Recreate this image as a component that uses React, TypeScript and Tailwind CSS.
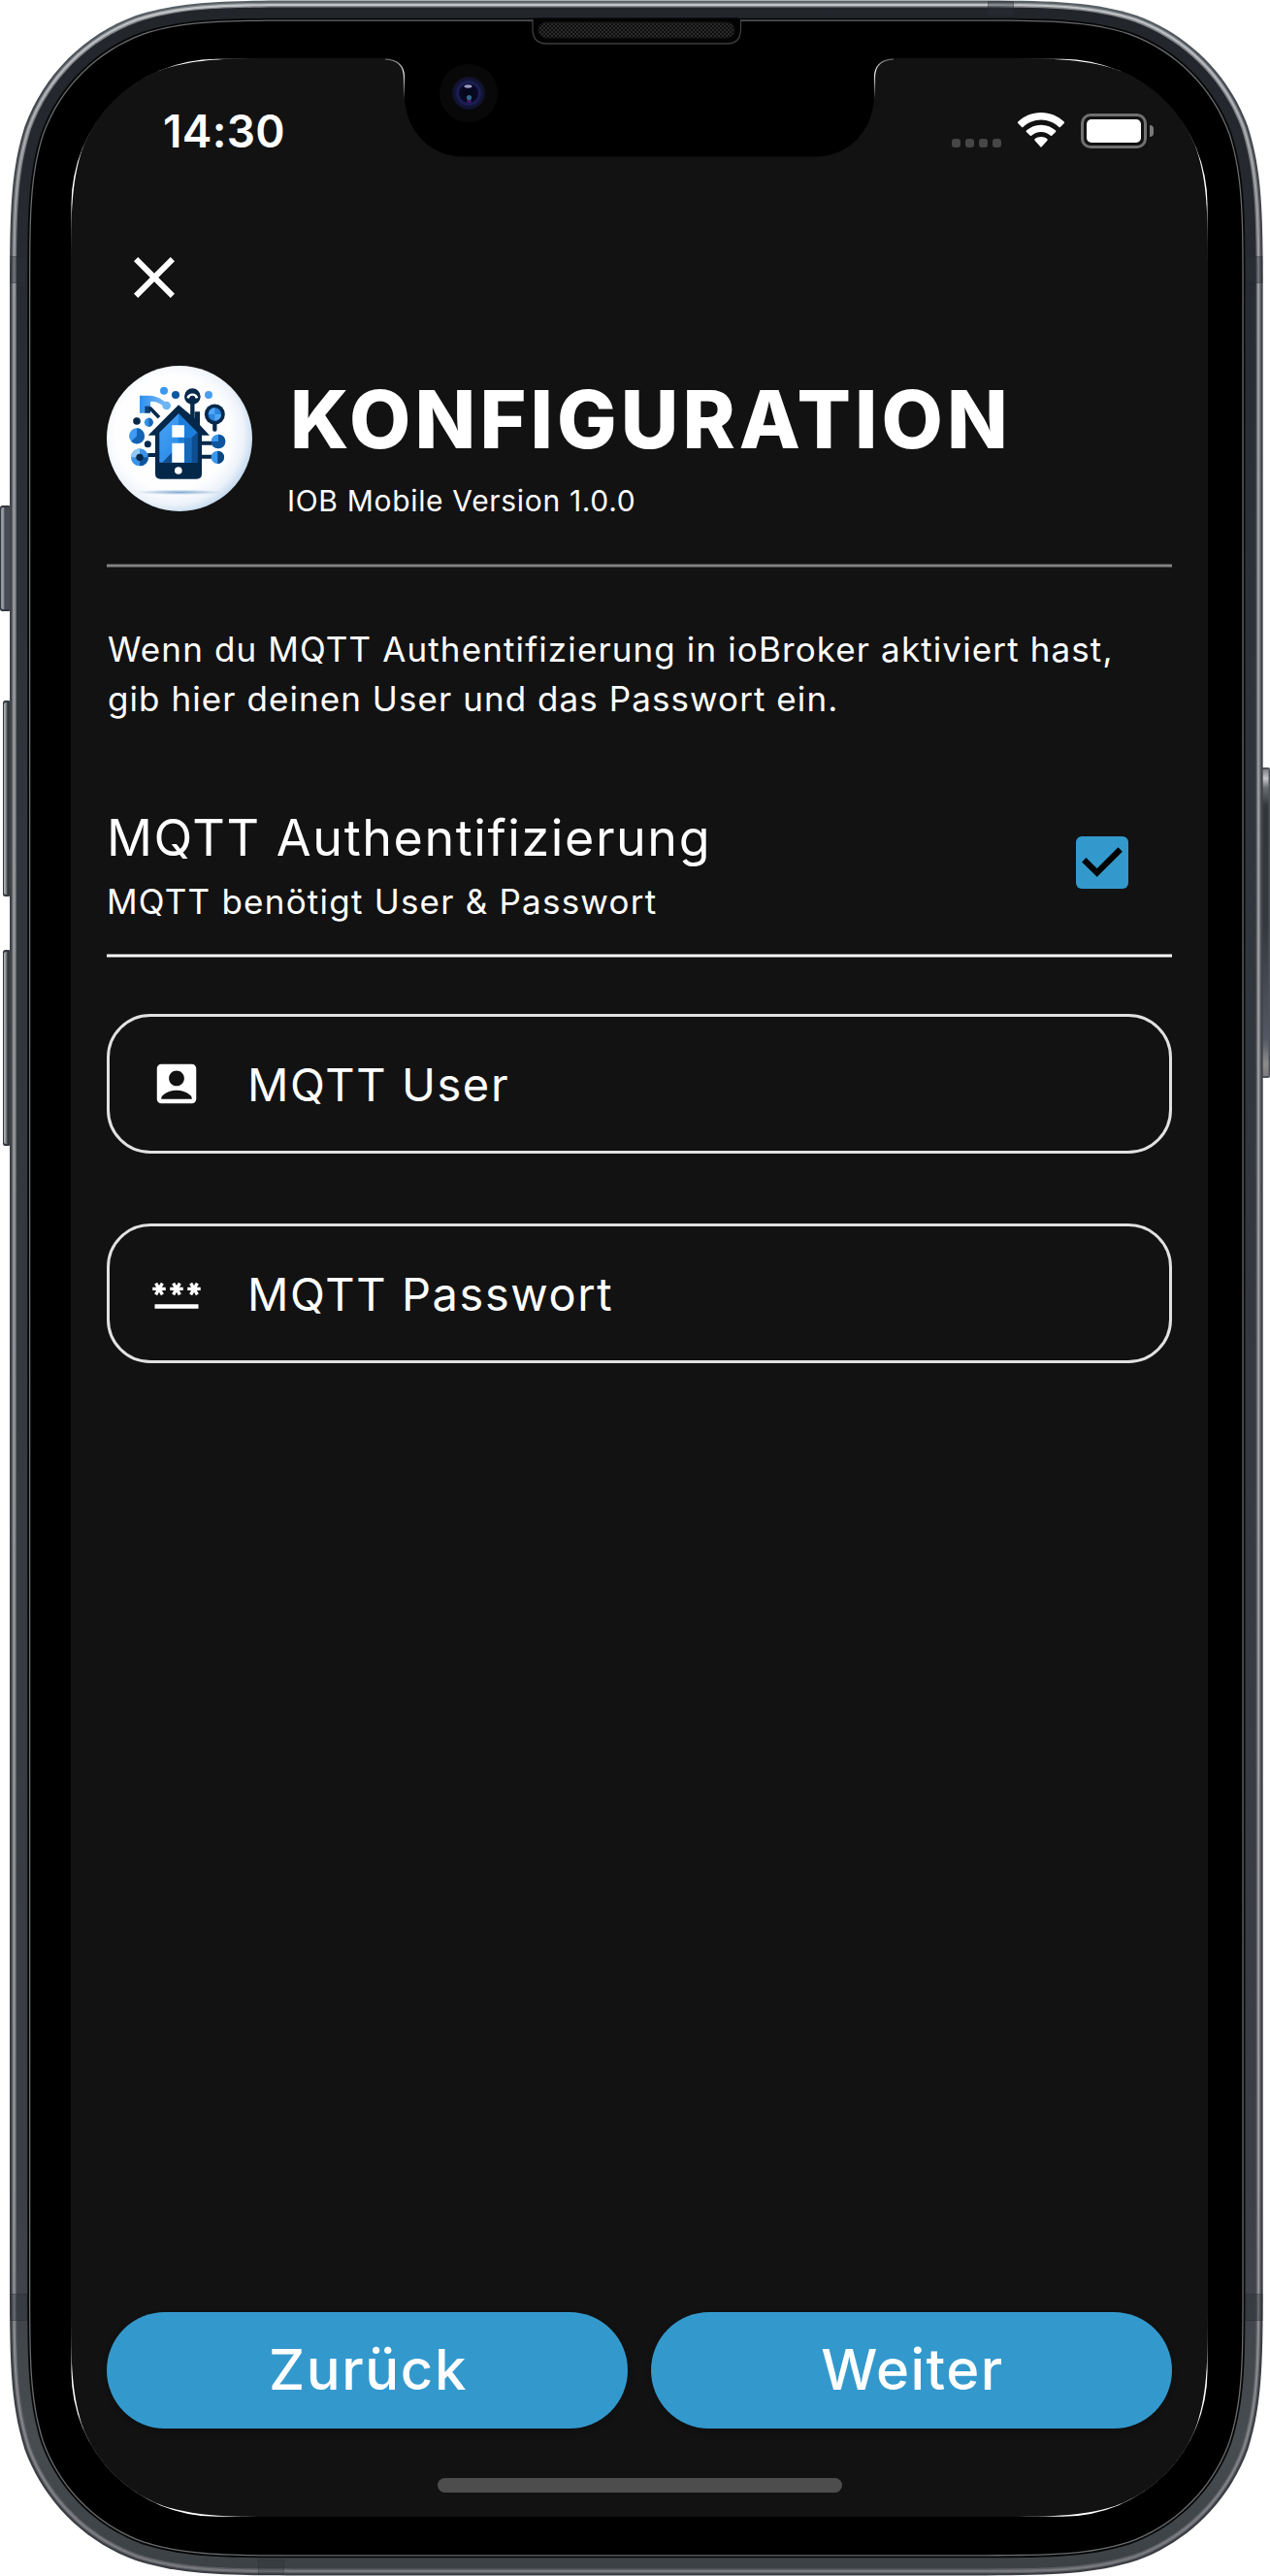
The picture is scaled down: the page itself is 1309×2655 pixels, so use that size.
import React from "react";
import { MdClose, MdPassword } from "react-icons/md";

/** Rounded rectangle with continuous-curvature corners. */
function squircle(x0: number, y0: number, x1: number, y1: number, r: number) {
  const a = 1.52866 * r, b = 1.08849 * r, c = 0.86841 * r, d = 0.63149 * r;
  const e = 0.07491 * r, f = 0.37282 * r, g = 0.16906 * r;
  return [
    `M${x0 + a} ${y0}H${x1 - a}`,
    `C${x1 - b} ${y0} ${x1 - c} ${y0} ${x1 - d} ${y0 + e}`,
    `C${x1 - f} ${y0 + g} ${x1 - g} ${y0 + f} ${x1 - e} ${y0 + d}`,
    `C${x1} ${y0 + c} ${x1} ${y0 + b} ${x1} ${y0 + a}V${y1 - a}`,
    `C${x1} ${y1 - b} ${x1} ${y1 - c} ${x1 - e} ${y1 - d}`,
    `C${x1 - g} ${y1 - f} ${x1 - f} ${y1 - g} ${x1 - d} ${y1 - e}`,
    `C${x1 - c} ${y1} ${x1 - b} ${y1} ${x1 - a} ${y1}H${x0 + a}`,
    `C${x0 + b} ${y1} ${x0 + c} ${y1} ${x0 + d} ${y1 - e}`,
    `C${x0 + f} ${y1 - g} ${x0 + g} ${y1 - f} ${x0 + e} ${y1 - d}`,
    `C${x0} ${y1 - c} ${x0} ${y1 - b} ${x0} ${y1 - a}V${y0 + a}`,
    `C${x0} ${y0 + b} ${x0} ${y0 + c} ${x0 + e} ${y0 + d}`,
    `C${x0 + g} ${y0 + f} ${x0 + f} ${y0 + g} ${x0 + d} ${y0 + e}`,
    `C${x0 + c} ${y0} ${x0 + b} ${y0} ${x0 + a} ${y0}Z`,
  ].join("");
}

const inset = (n: number) => squircle(10 + n, 0.5 + n, 1301.7 - n, 2654.5 - n, 206 - n);

function SideButton({ x, y, w, h, fill }: { x: number; y: number; w: number; h: number; fill: string }) {
  return (
    <g>
      <rect x={x} y={y} width={w} height={h} rx="2.5" fill="#33373f" />
      <rect x={x + 1} y={y + 2} width={w} height={h - 4} rx="2" fill={`url(#${fill})`} />
    </g>
  );
}

function DeviceFrame() {
  return (
    <svg className="absolute inset-0" width="1309" height="2655" viewBox="0 0 1309 2655" aria-hidden="true">
      <defs>
        <linearGradient id="edge" x1="0" y1="0" x2="0" y2="1">
          <stop offset="0" stopColor="#566065" />
          <stop offset="0.04" stopColor="#43474d" />
          <stop offset="1" stopColor="#3a3c42" />
        </linearGradient>
        <linearGradient id="shine" x1="0" y1="0" x2="0" y2="1">
          <stop offset="0" stopColor="#c3c6c8" />
          <stop offset="0.08" stopColor="#9c9da1" />
          <stop offset="0.85" stopColor="#97989c" />
          <stop offset="1" stopColor="#77797d" />
        </linearGradient>
        <linearGradient id="shineSoft" x1="0" y1="0" x2="0" y2="1">
          <stop offset="0" stopColor="#85898c" />
          <stop offset="0.1" stopColor="#6b6d72" />
          <stop offset="1" stopColor="#5d6064" />
        </linearGradient>
        <linearGradient id="body" x1="0" y1="0" x2="0" y2="1">
          <stop offset="0" stopColor="#22252a" />
          <stop offset="0.1" stopColor="#272b31" />
          <stop offset="0.3" stopColor="#30343c" />
          <stop offset="0.85" stopColor="#3b3e45" />
          <stop offset="0.95" stopColor="#474c50" />
          <stop offset="1" stopColor="#3c4145" />
        </linearGradient>
        <linearGradient id="sideShort" x1="0" y1="0" x2="1" y2="0">
          <stop offset="0" stopColor="#8b8e95" />
          <stop offset="0.2" stopColor="#9fa2a8" />
          <stop offset="0.35" stopColor="#474b55" />
          <stop offset="1" stopColor="#4a4c52" />
        </linearGradient>
        <linearGradient id="sideLong" x1="0" y1="0" x2="1" y2="0">
          <stop offset="0" stopColor="#b3b6b8" />
          <stop offset="0.25" stopColor="#8d9294" />
          <stop offset="0.5" stopColor="#2c3336" />
          <stop offset="1" stopColor="#4a5157" />
        </linearGradient>
        <linearGradient id="power" x1="0" y1="0" x2="0" y2="1">
          <stop offset="0" stopColor="#7d8086" />
          <stop offset="0.03" stopColor="#c5c6ca" />
          <stop offset="0.06" stopColor="#6a6d70" />
          <stop offset="0.12" stopColor="#33373a" />
          <stop offset="0.5" stopColor="#33383e" />
          <stop offset="0.88" stopColor="#535964" />
          <stop offset="0.96" stopColor="#8c8c8c" />
          <stop offset="1" stopColor="#7d7d7f" />
        </linearGradient>
        <linearGradient id="notchGlint" gradientUnits="userSpaceOnUse" x1="0" y1="60" x2="0" y2="102">
          <stop offset="0" stopColor="#ffffff" stopOpacity="0.35" />
          <stop offset="0.35" stopColor="#ffffff" />
          <stop offset="1" stopColor="#ffffff" stopOpacity="0" />
        </linearGradient>
        <pattern id="mesh" width="4" height="4" patternUnits="userSpaceOnUse">
          <rect width="4" height="4" fill="#0e0e0e" />
          <rect width="2" height="2" fill="#2b2b2b" />
          <rect x="2" y="2" width="2" height="2" fill="#2b2b2b" />
        </pattern>
        <radialGradient id="lens">
          <stop offset="0" stopColor="#05061a" />
          <stop offset="0.52" stopColor="#080920" />
          <stop offset="0.66" stopColor="#1e2160" />
          <stop offset="0.78" stopColor="#14163a" />
          <stop offset="1" stopColor="#0f1026" />
        </radialGradient>
      </defs>

      <SideButton x={0} y={521} w={11} h={109} fill="sideShort" />
      <SideButton x={3} y={722} w={8} h={202} fill="sideLong" />
      <SideButton x={3} y={979} w={8} h={202} fill="sideLong" />
      <rect x="1300" y="791" width="9" height="320" rx="2" fill="#50545c" />
      <rect x="1300" y="793" width="7.5" height="316" fill="url(#power)" />

      <path d={inset(0)} fill="url(#edge)" />
      <path d={inset(2.2)} fill="url(#shineSoft)" />
      <path d={inset(3.4)} fill="url(#shine)" />
      <path d={inset(5.6)} fill="url(#shineSoft)" />
      <path d={inset(7)} fill="url(#body)" />

      <g fill="#2a3036" fillOpacity="0.4" stroke="#23282c" strokeOpacity="0.4">
        <rect x="11" y="264.5" width="17" height="27" />
        <rect x="1284" y="264.5" width="17" height="27" />
        <rect x="11" y="2364.5" width="17" height="27" />
        <rect x="1284" y="2364.5" width="17" height="27" />
        <rect x="1018.5" y="1.5" width="26" height="15" />
        <rect x="266.5" y="2638.5" width="26" height="15" fillOpacity="0.25" strokeOpacity="0.3" />
      </g>

      <path d={inset(18.2)} fill="#060708" />
      <path d={inset(20)} fill="#6a6b6c" />
      <path d={inset(21.3)} fill="#000000" />

      <rect x="73.5" y="60.8" width="1171" height="2533" rx="149.5" fill="#ffffff" />
      <path d={squircle(73, 60, 1245, 2594, 151)} fill="#121212" />

      <path
        d="M396 59C410 60.5 417 67 417 82V98C417 133 442 161.500 478 161.500H840C876 161.500 901 133 901 98V82C901 67 908 60.500 922 59Z"
        fill="#000000"
      />
      <path
        d="M397 61C410 61.500 416.500 68 416.500 80V102M921 61C908 61.500 901.500 68 901.500 80V102"
        fill="none"
        stroke="url(#notchGlint)"
        strokeWidth="1.2"
      />

      <path d="M549 20V30Q549 45 564 45H749Q763.500 45 763.500 30V20" fill="#030303" stroke="#3e3e3e" strokeWidth="1.3" />
      <rect x="551" y="18.500" width="210" height="3" fill="#030303" />
      <rect x="555" y="23" width="202" height="16" rx="8" fill="url(#mesh)" stroke="#161616" />

      <circle cx="483" cy="96" r="30" fill="#080808" />
      <circle cx="483" cy="96" r="17" fill="url(#lens)" />
      <ellipse cx="482.500" cy="89" rx="4" ry="1.700" fill="#9a9ac4" />
      <circle cx="483.500" cy="104" r="2.200" fill="#4a1870" />
      <circle cx="483.500" cy="100.500" r="2.600" fill="#2c6a88" />
    </svg>
  );
}

function StatusBar() {
  return (
    <div className="flex h-[44px] items-start pl-[58px] pr-[19px]">
      <span className="text-[46px] font-semibold leading-[44px] tracking-[0.3px]">14:30</span>
      <div className="ml-auto flex items-start pt-[3px]">
        <div className="mr-[17px] flex gap-[5px] pt-[27px]">
          <i className="size-[9px] rounded-[3px] bg-[#464646]" />
          <i className="size-[9px] rounded-[3px] bg-[#464646]" />
          <i className="size-[9px] rounded-[3px] bg-[#464646]" />
          <i className="size-[9px] rounded-[3px] bg-[#464646]" />
        </div>
        <svg className="mr-[17px]" width="48" height="36" viewBox="0 0 48 36" fill="#fff" aria-hidden="true">
          <path d="M24 0C33.300 0 41.600 3.600 47.800 9.600Q48.500 10.300 47.800 11L43.900 14.900Q43.200 15.500 42.500 14.900C37.500 10.300 31 7.500 24 7.500S10.500 10.300 5.500 14.900Q4.800 15.500 4.100 14.900L.2 11Q-.5 10.300.2 9.600C6.400 3.600 14.700 0 24 0Z" />
          <path d="M24 12.700C29.800 12.700 35.100 14.900 39.100 18.500Q39.800 19.200 39.100 19.900L35.200 23.700Q34.500 24.300 33.800 23.700C31.200 21.400 27.800 20 24 20S16.800 21.400 14.200 23.700Q13.500 24.300 12.800 23.700L8.900 19.900Q8.200 19.200 8.900 18.500C12.900 14.900 18.200 12.700 24 12.700Z" />
          <path d="M24 25C26.400 25 28.700 25.900 30.400 27.300Q31.200 28 30.500 28.700L24.700 35.300Q24 36 23.300 35.300L17.500 28.700Q16.800 28 17.600 27.300C19.300 25.900 21.600 25 24 25Z" />
        </svg>
        <div className="mt-px flex items-center">
          <div className="h-[36px] w-[68px] rounded-[10px] border-[3px] border-[#707070] p-[3px]">
            <div className="h-full w-full rounded-[5px] bg-white" />
          </div>
          <div className="ml-[3px] h-[12px] w-[4px] rounded-r-full bg-[#7a7a7a]" />
        </div>
      </div>
    </div>
  );
}

function Logo() {
  return (
    <svg className="size-[150px] shrink-0" viewBox="60 52 450 450" aria-hidden="true">
      <defs>
        <radialGradient id="disc" cx="0.45" cy="0.46" r="0.56">
          <stop offset="0.7" stopColor="#fefeff" />
          <stop offset="0.88" stopColor="#eef3fa" />
          <stop offset="1" stopColor="#c6dbef" />
        </radialGradient>
        <radialGradient id="ground">
          <stop offset="0" stopColor="#7fa8d0" />
          <stop offset="1" stopColor="#7fa8d0" stopOpacity="0" />
        </radialGradient>
        <linearGradient id="blue" x1="0" y1="0" x2="1" y2="1">
          <stop offset="0" stopColor="#4aa5f8" />
          <stop offset="1" stopColor="#1b7fdd" />
        </linearGradient>
        <linearGradient id="arc" x1="0" y1="0" x2="1" y2="0">
          <stop offset="0" stopColor="#2f90ec" />
          <stop offset="1" stopColor="#7dbcf6" />
        </linearGradient>
      </defs>
      <circle cx="285" cy="277" r="225" fill="url(#disc)" />
      <ellipse cx="285" cy="443" rx="135" ry="8" fill="url(#ground)" />

      <path d="M162 144H190C215 144 235 158 250 170L242 182C228 170 212 160 195 163V198H162Z" fill="url(#arc)" />
      <path d="M178 177H195V198H178Z" fill="#0d3f74" />
      <circle cx="245" cy="175" r="13" fill="#6fb5f6" />
      <path d="M193 182 222 212" stroke="#04284a" strokeWidth="11" />

      <circle cx="237" cy="129" r="12" fill="#3b98ee" />
      <circle cx="273" cy="142" r="12" fill="#0b57a0" />
      <circle cx="375" cy="142" r="12" fill="#4a9ff0" />
      <circle cx="153" cy="223" r="11.500" fill="#04284a" />
      <circle cx="190" cy="227" r="13.500" fill="#3490e8" />
      <path d="M190 213.500A13.500 13.500 0 0 1 190 240.500Z" fill="#1668b8" />
      <circle cx="187" cy="294" r="10.500" fill="#04284a" />

      <circle cx="153" cy="269" r="24" fill="#3d9bf3" />
      <path d="M153 269V245A24 24 0 0 1 177 269ZM153 269H177A24 24 0 0 1 136 286Z" fill="#1463b3" />
      <circle cx="162" cy="335" r="27" fill="#3a93e6" />
      <path d="M162 335H135A27 27 0 0 1 162 308Z" fill="#93c8f7" />
      <path d="M162 335H189A27 27 0 0 1 162 362Z" fill="#0f559c" />
      <circle cx="162" cy="335" r="11" fill="#04284a" />
      <path d="M187 328H214M352 291H392M352 333H392" stroke="#04284a" strokeWidth="12" />

      <circle cx="405" cy="286" r="22" fill="#3a96ee" />
      <path d="M405 286V264A22 22 0 0 1 427 286ZM427 286A22 22 0 0 1 383 286Z" fill="#0e559d" />
      <circle cx="403" cy="335" r="20" fill="#3a96ee" />
      <path d="M403 315A20 20 0 0 1 403 355Z" fill="#0c4680" />

      <path d="M394 228V249" stroke="#04284a" strokeWidth="13" strokeLinecap="round" />
      <circle cx="394" cy="202" r="31.500" fill="#04284a" />
      <circle cx="394" cy="202" r="20" fill="#2b86e0" />
      <path d="M394 202V182A20 20 0 0 0 374 202ZM394 202V222A20 20 0 0 0 414 202Z" fill="#4ea6f5" />

      <path d="M325 160V235" stroke="#04284a" strokeWidth="13" />
      <circle cx="325" cy="147" r="25" fill="#04284a" />
      <path d="M311 152A14.500 14.500 0 0 1 339 152" fill="none" stroke="#fff" strokeWidth="8" />
      <circle cx="325" cy="152" r="8" fill="#04284a" />

      <path d="M282 173 332 214V194H348V235L378 267H354V386Q354 402 338 402H226Q210 402 210 386V267H188Z" fill="#04284a" />
      <path d="M282 200 340 258V351H223V258Z" fill="url(#blue)" />
      <path d="M282 200 340 258 322 275V351H282Z" fill="#1b7edb" />
      <path d="M322 275 340 258V351H322Z" fill="#0d4e92" />
      <path d="M300 275H322V351H300Z" fill="#1668b8" />
      <path d="M232 351 262 320V351Z" fill="#0f4f90" />
      <path d="M262 236H300V273H262ZM262 291H300V351H262Z" fill="#fff" />
      <circle cx="281.500" cy="376" r="11.500" fill="#fff" />
    </svg>
  );
}

function Field({ icon, label }: { icon: React.ReactNode; label: string }) {
  return (
    <div className="flex h-[144px] items-center gap-[46px] rounded-[45px] border-[3px] border-[#e1e1e1] pl-[42px]">
      {icon}
      <span className="mt-[1px] text-[47px] leading-[56px] tracking-[1.6px]">{label}</span>
    </div>
  );
}

function AccountBoxIcon() {
  return (
    <svg className="size-[54px]" viewBox="0 0 24 24" fill="currentColor" aria-hidden="true">
      <path d="M19 3H5c-1.100 0-2 .9-2 2v14c0 1.100.9 2 2 2h14c1.100 0 2-.9 2-2V5c0-1.100-.9-2-2-2zm-7 3c1.930 0 3.500 1.570 3.500 3.500S13.930 13 12 13s-3.500-1.570-3.500-3.500S10.070 6 12 6zm7 13H5v-.23c0-.62.28-1.200.76-1.580C7.470 15.820 9.640 15 12 15s4.530.82 6.240 2.190c.48.380.76.970.76 1.580V19z" />
    </svg>
  );
}

export default function App() {
  return (
    <div className="relative h-[2655px] w-[1309px] overflow-hidden bg-white font-['Inter',sans-serif] text-white">
      <DeviceFrame />
      <main className="relative flex h-full flex-col pb-[86px] pl-[110px] pr-[101px] pt-[113px]">
        <StatusBar />

        <button type="button" aria-label="Schließen" className="ml-[13px] mt-[93px] size-[72px]">
          <MdClose className="size-[72px]" />
        </button>

        <header className="mt-[55px] flex h-[150px] gap-[36px]">
          <Logo />
          <div className="pt-[15px]">
            <h1 className="ml-[3px] text-[82px] font-extrabold leading-[82px] tracking-[4.06px]">KONFIGURATION</h1>
            <p className="mt-[24px] text-[30px] leading-[36px] tracking-[0.67px]">IOB Mobile Version 1.0.0</p>
          </div>
        </header>

        <div className="mt-[54px] h-[4px] border-y border-[#4a4a4a] bg-[#828282]" />

        <p className="ml-px mt-[59px] whitespace-nowrap text-[35px] leading-[51px] tracking-[1.12px]">
          Wenn du MQTT Authentifizierung in ioBroker aktiviert hast,
          <br />
          <span className="tracking-[1.07px]">gib hier deinen User und das Passwort ein.</span>
        </p>

        <section className="mt-[88px] flex items-start justify-between">
          <div>
            <h2 className="text-[52px] leading-[60px] tracking-[1.58px]">MQTT Authentifizierung</h2>
            <p className="mt-[10px] text-[35px] leading-[51px] tracking-[1.22px]">MQTT benötigt User &amp; Passwort</p>
          </div>
          <div className="mr-[45px] mt-[28px] size-[54px] rounded-[6px] bg-[#3399cd]">
            <svg width="54" height="54" viewBox="0 0 54 54" fill="none" stroke="#000" strokeWidth="6.200" aria-hidden="true">
              <path d="M8.300 24.200 21.700 37.400 45.700 13.500" />
            </svg>
          </div>
        </section>

        <div className="mt-[28px] h-[4px] border-y border-[#888888] bg-white" />

        <div className="mt-[58px] flex flex-col gap-[72px]">
          <Field icon={<AccountBoxIcon />} label="MQTT User" />
          <Field icon={<MdPassword className="size-[54px]" />} label="MQTT Passwort" />
        </div>

        <div className="mt-auto grid grid-cols-2 gap-[24px]">
          <button type="button" className="h-[120px] rounded-full bg-[#3399cd] pb-[2px] pl-[2px] text-[58px] font-medium tracking-[1.6px] shadow-[0_3px_6px_rgba(0,0,0,0.2)]">
            Zurück
          </button>
          <button type="button" className="h-[120px] rounded-full bg-[#3399cd] pb-[2px] pl-[2px] text-[58px] font-medium tracking-[1.5px] shadow-[0_3px_6px_rgba(0,0,0,0.2)]">
            Weiter
          </button>
        </div>

        <div className="mt-[51px] h-[15px] w-[417px] shrink-0 self-center rounded-full bg-[#4d4d4d]" />
      </main>
    </div>
  );
}
